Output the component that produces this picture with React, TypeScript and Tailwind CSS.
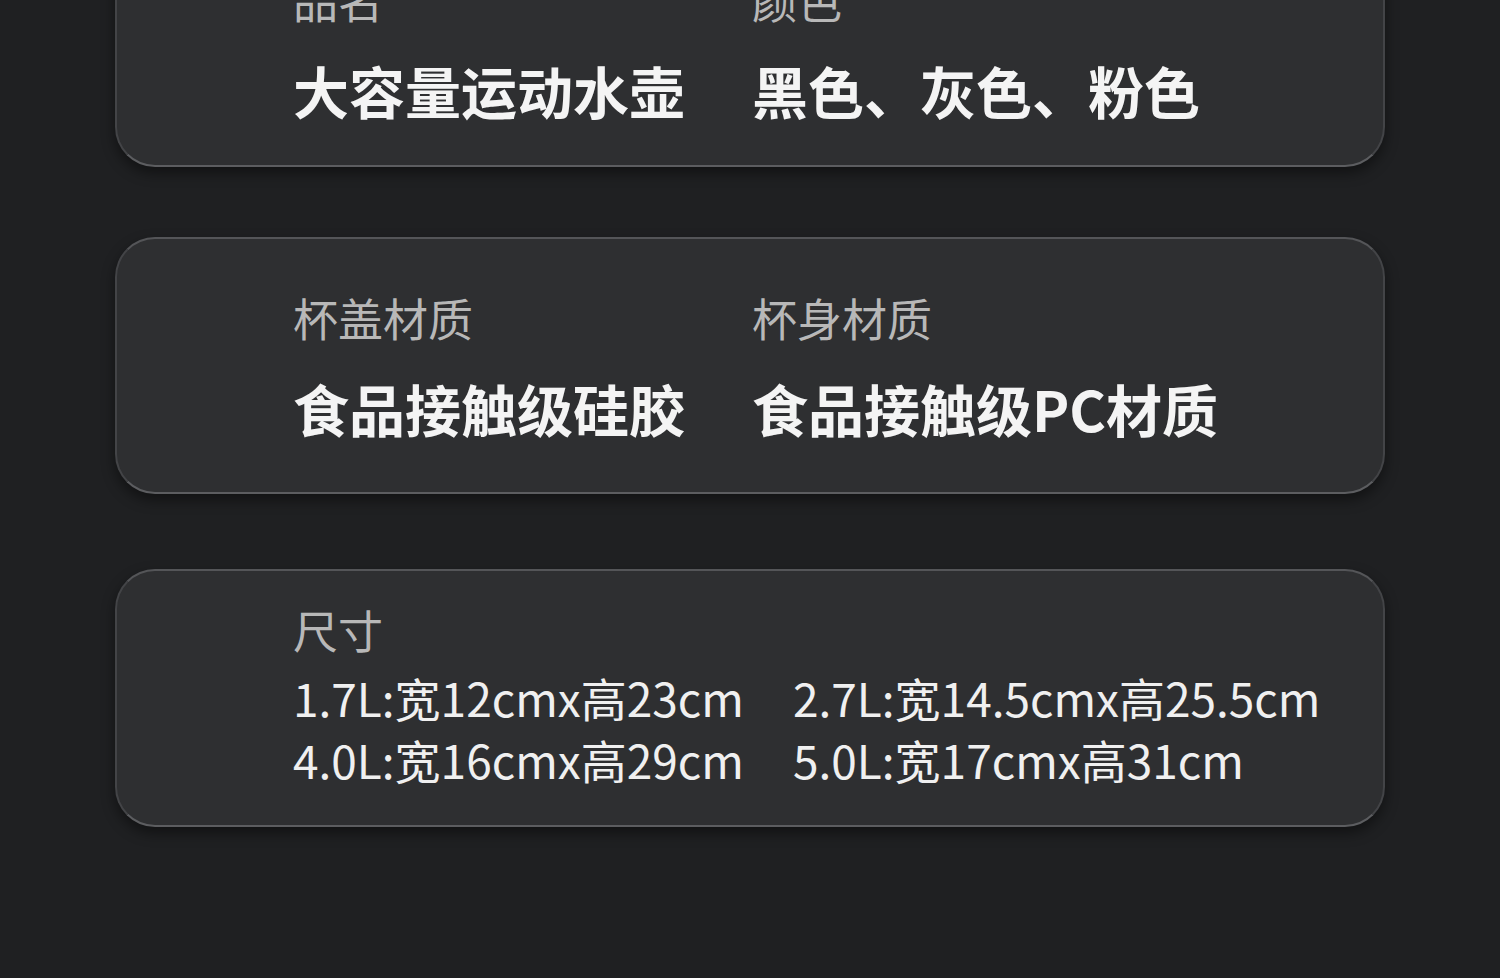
export default function App() {
  const font = { fontFamily: '"Noto Sans CJK SC", "Noto Sans", sans-serif' };
  return (
    <div className="w-[1500px] h-[978px] overflow-hidden bg-[#1f2022]" style={font}>
      <div className="flex flex-col px-[115px] -mt-[78px]">
        <div className="h-[245px] rounded-[40px] bg-[#2e2f31] border-2 border-[#434447] border-b-[#5c5d60] shadow-[0_6px_14px_rgba(0,0,0,0.45)] flex flex-col justify-center pl-[176px] pt-[6px]">
          <div className="grid grid-cols-[459px_1fr]">
            <div className="text-[45px] leading-none text-[#b8b8b8]">品名</div>
            <div className="text-[45px] leading-none text-[#b8b8b8]">颜色</div>
          </div>
          <div className="grid grid-cols-[459px_1fr] mt-[40px]">
            <div className="text-[56px] leading-none font-semibold text-[#f4f4f4]">大容量运动水壶</div>
            <div className="text-[56px] leading-none font-semibold text-[#f4f4f4]">黑色、灰色、粉色</div>
          </div>
        </div>

        <div className="mt-[70px] h-[257px] rounded-[40px] bg-[#2e2f31] border-2 border-[#434447] border-t-[#545558] border-b-[#5c5d60] shadow-[0_6px_14px_rgba(0,0,0,0.45)] flex flex-col justify-center pl-[176px]">
          <div className="grid grid-cols-[459px_1fr]">
            <div className="text-[45px] leading-none text-[#b8b8b8]">杯盖材质</div>
            <div className="text-[45px] leading-none text-[#b8b8b8]">杯身材质</div>
          </div>
          <div className="grid grid-cols-[459px_1fr] mt-[40px]">
            <div className="text-[56px] leading-none font-semibold text-[#f4f4f4]">食品接触级硅胶</div>
            <div className="text-[56px] leading-none font-semibold text-[#f4f4f4]">食品接触级PC材质</div>
          </div>
        </div>

        <div className="mt-[75px] h-[258px] rounded-[40px] bg-[#2e2f31] border-2 border-[#434447] border-t-[#545558] border-b-[#5c5d60] shadow-[0_6px_14px_rgba(0,0,0,0.45)] flex flex-col justify-center pl-[176px]">
          <div className="text-[45px] leading-none text-[#b8b8b8]">尺寸</div>
          <div className="grid grid-cols-[500px_1fr] mt-[14px] text-[46px] leading-[62px] text-[#f0f0f0]">
            <div>1.7L:宽12cmx高23cm</div>
            <div>2.7L:宽14.5cmx高25.5cm</div>
            <div>4.0L:宽16cmx高29cm</div>
            <div>5.0L:宽17cmx高31cm</div>
          </div>
        </div>
      </div>
    </div>
  );
}
